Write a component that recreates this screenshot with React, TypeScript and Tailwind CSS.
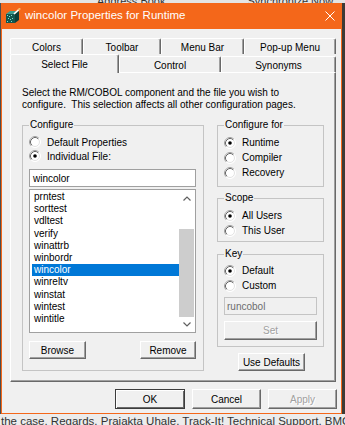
import type { ReactNode } from 'react';

const FILES = [
  'prntest',
  'sorttest',
  'vdltest',
  'verify',
  'winattrb',
  'winbordr',
  'wincolor',
  'winreltv',
  'winstat',
  'wintest',
  'wintitle',
];

function Radio({ label, checked, h = 'h-[15px]' }: { label: string; checked?: boolean; h?: string }) {
  return (
    <div className={`flex items-center gap-[6px] ${h}`}>
      <svg width="12" height="12" viewBox="0 0 12 12" className="shrink-0">
        <circle cx="6" cy="6" r="5.5" fill="#fff" stroke="#fff" />
        <path d="M2.11 9.89A5.5 5.5 0 0 1 9.89 2.11" fill="none" stroke="#a0a0a0" />
        <circle cx="6" cy="6" r="4.5" fill="#fff" stroke="#e3e3e3" />
        <path d="M2.82 9.18A4.5 4.5 0 0 1 9.18 2.82" fill="none" stroke="#696969" />
        {checked && <circle cx="6" cy="6" r="1.8" fill="#000" />}
      </svg>
      <span>{label}</span>
    </div>
  );
}

function Btn({
  children,
  className = '',
  disabled,
  isDefault,
}: {
  children: ReactNode;
  className?: string;
  disabled?: boolean;
  isDefault?: boolean;
}) {
  const frame = isDefault
    ? 'border border-[#3c3c3c] shadow-[inset_1px_1px_0_#fff,inset_-1px_-1px_0_#696969]'
    : 'border border-l-white border-t-white border-r-[#696969] border-b-[#696969] shadow-[inset_-1px_-1px_0_#a0a0a0]';
  return (
    <div
      className={`flex items-center justify-center bg-[#f0f0f0] ${frame} ${
        disabled ? 'text-[#a0a0a0] [text-shadow:1px_1px_0_#fff]' : 'text-black'
      } ${className}`}
    >
      {children}
    </div>
  );
}

function Tab({ label, w, selected }: { label: string; w: string; selected?: boolean }) {
  return (
    <div
      className={`flex shrink-0 justify-center rounded-t-[2px] border-l border-r border-t border-l-white border-r-[#696969] border-t-white bg-[#f0f0f0] shadow-[inset_-1px_0_0_#a0a0a0] ${w} ${
        selected ? 'relative z-10 -mb-[1px] h-[19px] pt-[2px]' : 'h-[16px] pt-[1px]'
      }`}
    >
      {label}
    </div>
  );
}

function Group({ title, children, className = '' }: { title: string; children: ReactNode; className?: string }) {
  return (
    <fieldset className={`m-0 min-w-0 border border-[#c4c4c4] p-0 ${className}`}>
      <legend className="ml-[6px] px-[1px] leading-[12px]">{title}</legend>
      {children}
    </fieldset>
  );
}

function Chevron({ up }: { up?: boolean }) {
  return (
    <svg width="8" height="5" viewBox="0 0 8 5">
      <polyline
        points={up ? '0.5,4.5 4,1 7.5,4.5' : '0.5,0.5 4,4 7.5,0.5'}
        fill="none"
        stroke="#606060"
        strokeWidth="1.2"
      />
    </svg>
  );
}

export default function App() {
  return (
    <div className="flex h-[425px] w-[345px] flex-col overflow-hidden bg-[#3a3a3a] font-['Liberation_Sans',Arial,sans-serif] text-[10px] text-black">
      {/* window behind, top edge */}
      <div className="flex h-[3px] overflow-hidden bg-[#e4e4e4] text-[11px] text-[#333]">
        <span className="-mt-[7px] ml-[80px] h-[3px] w-[12px] bg-[#8a8a8a]" />
        <span className="-mt-[7px] ml-[5px] whitespace-nowrap">Address Book</span>
        <span className="-mt-[7px] ml-[68px] h-[3px] w-[10px] bg-[#3b7bd0]" />
        <span className="-mt-[7px] ml-[4px] whitespace-nowrap">Synchronize Now</span>
      </div>

      <div className="flex h-[411px]">
        <div className="w-[1px] bg-[#4d4d4d]" />
        <div className="flex w-[341px] flex-col">
          {/* title bar */}
          <div className="flex h-[26px] items-center bg-[#f4671a] pl-[4px] pr-[7px] text-[11.5px] text-white">
            <svg width="16" height="16" viewBox="0 0 16 16" className="shrink-0">
              <polygon points="1,6 5,3 14,3 10,6" fill="#3f9c8e" />
              <polygon points="10,6 14,3 14,12 10,15" fill="#0c3f39" />
              <rect x="1" y="6" width="9" height="9" fill="#14574f" />
              <g fill="#7fe0d2">
                <rect x="2" y="7" width="1" height="1" />
                <rect x="4" y="8" width="1" height="1" />
                <rect x="6" y="7" width="1" height="1" />
                <rect x="3" y="10" width="1" height="1" />
                <rect x="5" y="11" width="1" height="1" />
                <rect x="7" y="10" width="1" height="1" />
                <rect x="2" y="13" width="1" height="1" />
                <rect x="6" y="13" width="1" height="1" />
              </g>
              <line x1="9" y1="6" x2="15" y2="0.5" stroke="#fff" strokeWidth="1.6" />
              <line x1="13.5" y1="2" x2="15" y2="0.5" stroke="#f4b04a" strokeWidth="1.6" />
            </svg>
            <span className="ml-[4px] whitespace-nowrap">wincolor Properties for Runtime</span>
            <svg width="10" height="10" viewBox="0 0 10 10" className="ml-auto">
              <path d="M0.5 0.5L9.5 9.5M9.5 0.5L0.5 9.5" stroke="#fff" strokeWidth="1" />
            </svg>
          </div>

          {/* client area */}
          <div className="flex h-[384px] flex-col border-x border-[#f4671a] bg-[#f0f0f0] pt-[7px]">
            <div className="ml-[8px] w-[326px]">
              <div className="flex h-[18px] items-end">
                <Tab label="Colors" w="w-[73px]" />
                <Tab label="Toolbar" w="w-[78px]" />
                <Tab label="Menu Bar" w="w-[83px]" />
                <Tab label="Pop-up Menu" w="w-[92px]" />
              </div>
              <div className="flex h-[18px] items-end">
                <Tab label="Select File" w="w-[109px]" selected />
                <Tab label="Control" w="w-[102px]" />
                <Tab label="Synonyms" w="w-[115px]" />
              </div>

              {/* tab page */}
              <div className="h-[310px] border border-b-[#696969] border-l-white border-r-[#696969] border-t-white pl-[11px] pt-[14px] shadow-[inset_-1px_-1px_0_#a0a0a0]">
                <p className="whitespace-pre leading-[12px]">
                  {'Select the RM/COBOL component and the file you wish to\nconfigure.  This selection affects all other configuration pages.'}
                </p>

                <div className="mt-[8px] flex gap-[13px]">
                  {/* Configure */}
                  <Group title="Configure" className="w-[182px]">
                    <div className="pb-[6px] pl-[6px] pr-[7px] pt-[4px]">
                      <Radio label="Default Properties" h="h-[14px]" />
                      <Radio label="Individual File:" checked h="h-[14px]" />
                      <div className="mt-[6px] flex h-[18px] items-center border border-[#a0a0a0] bg-white pl-[3px]">
                        wincolor
                      </div>
                      <div className="mt-[2px] flex h-[144px] border border-[#a0a0a0] bg-white">
                        <div className="flex-1 pl-[2px] pt-[1px]">
                          {FILES.map((f) => (
                            <div
                              key={f}
                              className={`h-[12.2px] pl-[2px] leading-[12.2px] ${
                                f === 'wincolor' ? 'bg-[#0078d7] text-white' : ''
                              }`}
                            >
                              {f}
                            </div>
                          ))}
                        </div>
                        <div className="flex w-[16px] flex-col">
                          <div className="flex h-[17px] items-center justify-center">
                            <Chevron up />
                          </div>
                          <div className="h-[22px]" />
                          <div className="mr-[1px] h-[88px] bg-[#cdcdcd]" />
                          <div className="flex flex-1 items-center justify-center">
                            <Chevron />
                          </div>
                        </div>
                      </div>
                      <div className="mt-[8px] flex justify-between">
                        <Btn className="h-[18px] w-[57px]">Browse</Btn>
                        <Btn className="h-[18px] w-[56px]">Remove</Btn>
                      </div>
                    </div>
                  </Group>

                  {/* right column */}
                  <div className="w-[107px]">
                    <Group title="Configure for">
                      <div className="pb-[6px] pl-[6px] pt-[4px]">
                        <Radio label="Runtime" checked />
                        <Radio label="Compiler" />
                        <Radio label="Recovery" />
                      </div>
                    </Group>
                    <Group title="Scope" className="mt-[5px]">
                      <div className="pb-[3px] pl-[6px] pt-[4px]">
                        <Radio label="All Users" checked />
                        <Radio label="This User" />
                      </div>
                    </Group>
                    <Group title="Key" className="mt-[6px]">
                      <div className="pb-[6px] pl-[6px] pt-[3px]">
                        <Radio label="Default" checked />
                        <Radio label="Custom" />
                        <div className="mt-[4px] flex h-[18px] w-[93px] items-center border border-[#c4c4c4] bg-[#f0f0f0] pl-[2px] text-[#6d6d6d]">
                          runcobol
                        </div>
                        <Btn disabled className="mt-[6px] h-[19px] w-[93px]">
                          Set
                        </Btn>
                      </div>
                    </Group>
                    <Btn className="ml-[21px] mt-[6px] h-[18px] w-[67px]">Use Defaults</Btn>
                  </div>
                </div>
              </div>
            </div>

            {/* dialog buttons */}
            <div className="mr-[4px] mt-[7px] flex justify-end gap-[7px]">
              <Btn isDefault className="h-[20px] w-[70px]">
                OK
              </Btn>
              <Btn className="h-[20px] w-[69px]">Cancel</Btn>
              <Btn disabled className="h-[20px] w-[69px]">
                Apply
              </Btn>
            </div>
          </div>
          <div className="h-[1px] bg-[#f4671a]" />
        </div>
        <div className="flex-1 bg-[#3d3a35]" />
      </div>

      {/* window behind, bottom edge */}
      <div className="h-[11px] overflow-hidden whitespace-nowrap bg-[#ececec] pl-[1px] pt-[1px] text-[11.5px] leading-[13px] text-[#333]">
        the case. Regards, Prajakta Uhale, Track-It! Technical Support, BMC Software
      </div>
    </div>
  );
}
